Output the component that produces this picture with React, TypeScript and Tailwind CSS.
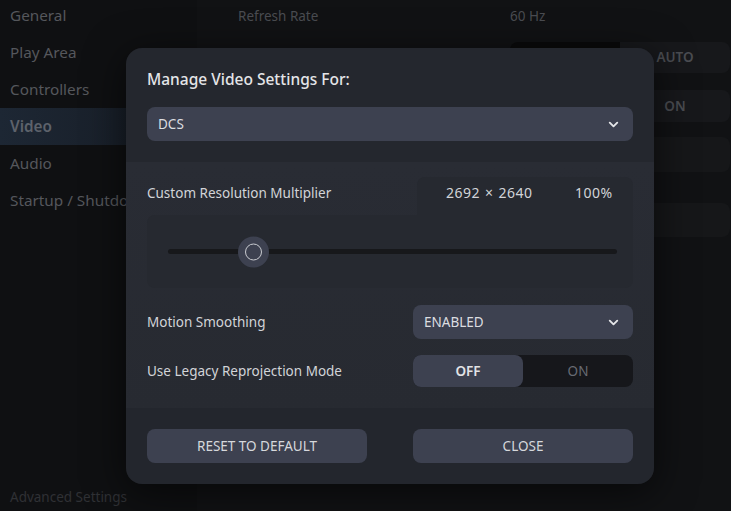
import { ChevronDown } from 'lucide-react';

const font = { fontFamily: '"Noto Sans", "Open Sans", Arial, sans-serif' };

const sideItems = ['General', 'Play Area', 'Controllers', 'Video', 'Audio', 'Startup / Shutdown'];

function Select({ value, className }: { value: string; className?: string }) {
  return (
    <div
      className={`flex h-[34px] items-center justify-between rounded-lg bg-[#3d4150] pl-[11px] pr-[12px] text-[13.5px] text-[#dcdde0] ${className ?? ''}`}
    >
      <span>{value}</span>
      <ChevronDown size={15} strokeWidth={3} className="text-[#e4e5e8]" />
    </div>
  );
}

function Background() {
  return (
    <div className="flex h-full">
      <aside className="flex w-[197px] flex-col bg-[#0f1012]">
        <ul className="-mt-[3px]">
          {sideItems.map((item) => (
            <li
              key={item}
              className={`flex h-[37px] items-center whitespace-nowrap pl-[10px] text-[15.3px] ${
                item === 'Video'
                  ? 'bg-gradient-to-r from-[#1d2734] to-[#161b23] font-semibold text-[#5d626b]'
                  : 'text-[#55575c]'
              }`}
            >
              {item}
            </li>
          ))}
        </ul>
        <div className="mt-auto pb-[4px] pl-[10px] text-[13.5px] text-[#2f3135]">Advanced Settings</div>
      </aside>
      <main className="flex-1 bg-[#111214] text-[13.5px] text-[#4a4c51]">
        <div className="-mt-[3px] flex h-[38px] items-center">
          <span className="w-[313px] pl-[41px]">Refresh Rate</span>
          <span>60 Hz</span>
        </div>
        <div className="flex flex-col items-end pr-[1px] pt-[7px]">
          <div className="flex h-[31px] w-[220px] overflow-hidden rounded-lg">
            <div className="w-[110px] bg-[#0a0a0b]" />
            <div className="flex flex-1 items-center justify-center bg-[#17181b] font-semibold">AUTO</div>
          </div>
          <div className="mt-[17px] flex h-[32px] w-[110px] items-center justify-center rounded-lg bg-[#17181b] font-semibold">
            ON
          </div>
          <div className="mt-[15px] h-[35px] w-[110px] rounded-lg bg-[#161719]" />
          <div className="mt-[31px] h-[34px] w-[110px] rounded-lg bg-[#161719]" />
        </div>
      </main>
    </div>
  );
}

function Modal() {
  return (
    <div className="absolute left-[126px] top-[48px] flex w-[528px] flex-col overflow-hidden rounded-2xl shadow-[0_8px_40px_rgba(0,0,0,0.6)]">
      <section className="bg-[#24272e] px-[21px] pb-[21px] pt-[20px]">
        <h2 className="text-[15.5px] font-medium leading-[22px] text-[#e4e5e8]">Manage Video Settings For:</h2>
        <Select value="DCS" className="mt-[17px]" />
      </section>

      <section className="bg-gradient-to-b from-[#292c34] to-[#272a31] px-[21px] pb-[21px] pt-[15px] text-[13.5px] text-[#d2d4d8]">
        <div className="flex items-start">
          <div className="flex-1 pt-[6px] leading-[20px]">Custom Resolution Multiplier</div>
          <div className="flex h-[38px] w-[216px] items-start rounded-t-lg bg-[#262930] pl-[29px] pt-[6px] text-[14px] leading-[20px] tracking-[0.5px]">
            <span className="w-[129px]">
              2692<span className="mx-[5px]">×</span>2640
            </span>
            <span>100%</span>
          </div>
        </div>
        <div className="flex h-[73px] items-center rounded-b-lg rounded-tl-lg bg-[#262930] pl-[21px] pr-[16px]">
          <div className="relative h-[5px] flex-1 rounded-full bg-[#17181b]">
            <div className="absolute left-[70px] top-1/2 flex h-[31px] w-[31px] -translate-y-1/2 items-center justify-center rounded-full bg-[#3d4150]">
              <div className="h-[17px] w-[17px] rounded-full border-[1.5px] border-[#c9cbd0]" />
            </div>
          </div>
        </div>

        <div className="mt-[17px] flex items-center">
          <span className="flex-1">Motion Smoothing</span>
          <Select value="ENABLED" className="w-[220px]" />
        </div>

        <div className="mt-[16px] flex items-center">
          <span className="flex-1">Use Legacy Reprojection Mode</span>
          <div className="flex h-[32px] w-[220px] rounded-lg bg-[#16171b] font-semibold">
            <div className="flex w-[110px] items-center justify-center rounded-lg bg-[#3d4150] text-[#e2e3e6]">OFF</div>
            <div className="flex flex-1 items-center justify-center font-normal text-[#686b73]">ON</div>
          </div>
        </div>
      </section>

      <section className="flex justify-between bg-[#23262d] px-[21px] pb-[21px] pt-[21px] text-[13.5px] text-[#d6d8dc]">
        <button type="button" className="flex h-[34px] w-[220px] items-center justify-center rounded-lg bg-[#3d4150]">
          RESET TO DEFAULT
        </button>
        <button type="button" className="flex h-[34px] w-[220px] items-center justify-center rounded-lg bg-[#3d4150]">
          CLOSE
        </button>
      </section>
    </div>
  );
}

export default function App() {
  return (
    <div className="relative h-[511px] w-[731px] overflow-hidden bg-[#0f1012]" style={font}>
      <Background />
      <Modal />
    </div>
  );
}
